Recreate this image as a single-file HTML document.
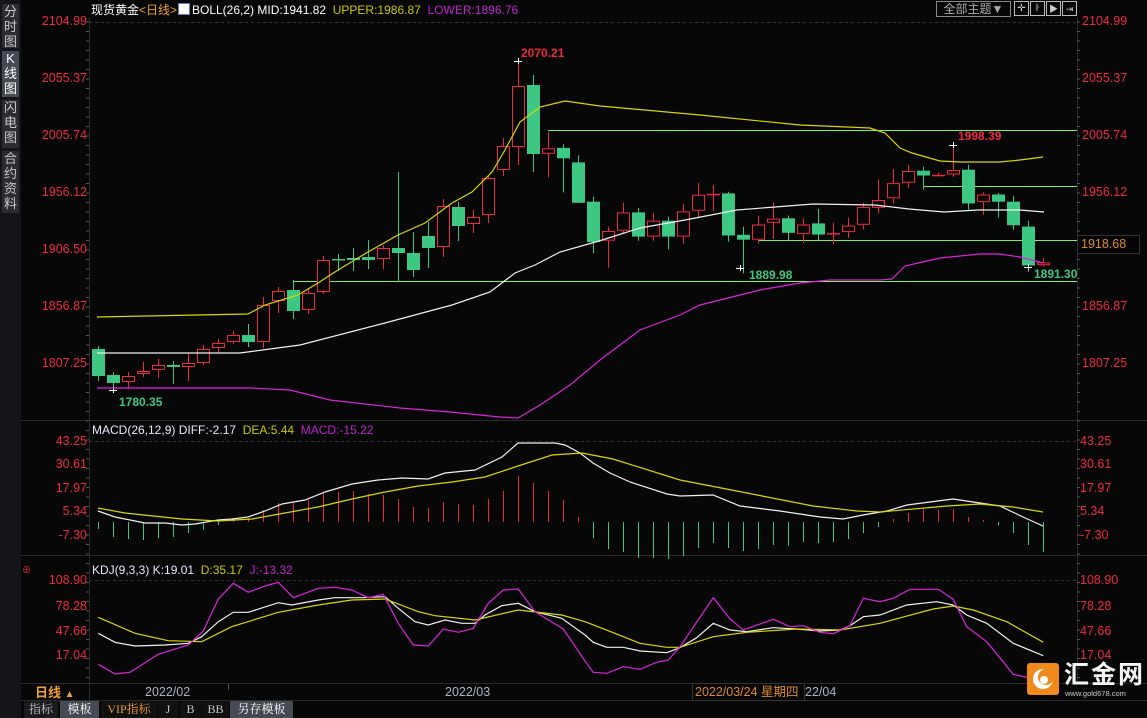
<!DOCTYPE html>
<html><head><meta charset="utf-8">
<style>
html,body{margin:0;padding:0;background:#070707;width:1147px;height:718px;overflow:hidden}
body{position:relative;font-family:"Liberation Sans","Noto Sans CJK SC",sans-serif}
.t{position:absolute;white-space:nowrap;font-size:12px;line-height:14px}
.side{position:absolute;left:2px;width:17px;background:#2b2d33;color:#c8c8c8;font-size:13px;line-height:15px;text-align:center}
.lab{position:absolute;font-size:12.5px;color:#f0283c;text-align:right;width:60px}
.tab{position:absolute;top:701px;height:17px;font-size:12px;line-height:17px;text-align:center;color:#c8c8c8;font-family:"Liberation Serif","Noto Serif CJK SC",serif}
</style></head><body>
<svg id="s" width="1147" height="718" style="position:absolute;left:0;top:0" xmlns="http://www.w3.org/2000/svg"></svg>

<div class="side" style="top:4px;height:44px">分<br>时<br>图</div>
<div class="side" style="top:51px;height:46px;background:#464a52;color:#fff">K<br>线<br>图</div>
<div class="side" style="top:100px;height:48px">闪<br>电<br>图</div>
<div class="side" style="top:151px;height:62px">合<br>约<br>资<br>料</div>

<div class="t" style="left:91px;top:3px;color:#fff">现货黄金<span style="color:#f0a030">&lt;日线&gt;</span></div>
<div class="t" style="left:178px;top:3px;width:12px;height:12px;background:#fff;border:1px solid #6a7ac0;box-sizing:border-box"></div>
<div class="t" style="left:192px;top:3px;color:#fff">BOLL(26,2) MID:1941.82 &nbsp;<span style="color:#c8c800">UPPER:1986.87</span> &nbsp;<span style="color:#c020d0">LOWER:1896.76</span></div>
<div class="t" style="left:936px;top:1px;width:73px;height:14px;border:1px solid #888;color:#aaa;text-align:center;font-size:12px">全部主题▼</div>
<div class="t" style="left:1014px;top:1px;width:13px;height:13px;border:1px solid #bbb;color:#ccc;font-size:10px;text-align:center">✛</div>
<div class="t" style="left:1030px;top:1px;width:13px;height:13px;border:1px solid #bbb;color:#ccc;font-size:10px;text-align:center">ŀ</div>
<div class="t" style="left:1046px;top:1px;width:13px;height:13px;border:1px solid #bbb;color:#ccc;font-size:9px;text-align:center">▶</div>
<div class="t" style="left:1062px;top:1px;width:13px;height:13px;border:1px solid #bbb;color:#ccc;font-size:9px;text-align:center">⇥</div>

<div class="lab" style="left:27px;top:14px">2104.99</div>
<div class="lab" style="left:27px;top:71px">2055.37</div>
<div class="lab" style="left:27px;top:128px">2005.74</div>
<div class="lab" style="left:27px;top:185px">1956.12</div>
<div class="lab" style="left:27px;top:242px">1906.50</div>
<div class="lab" style="left:27px;top:299px">1856.87</div>
<div class="lab" style="left:27px;top:356px">1807.25</div>
<div class="lab" style="left:1082px;top:14px;text-align:left">2104.99</div>
<div class="lab" style="left:1082px;top:71px;text-align:left">2055.37</div>
<div class="lab" style="left:1082px;top:128px;text-align:left">2005.74</div>
<div class="lab" style="left:1082px;top:185px;text-align:left">1956.12</div>
<div class="lab" style="left:1082px;top:299px;text-align:left">1856.87</div>
<div class="lab" style="left:1082px;top:356px;text-align:left">1807.25</div>
<div class="t" style="left:1077px;top:235px;width:58px;height:17px;border:1px solid #333;background:#050505;color:#e08a2a;font-size:12.5px;line-height:17px;padding-left:3px">1918.68</div>

<div class="t" style="left:521px;top:46px;color:#f0283c;font-weight:bold">2070.21</div>
<div class="t" style="left:958px;top:129px;color:#f0283c;font-weight:bold">1998.39</div>
<div class="t" style="left:749px;top:268px;color:#3cc882;font-weight:bold">1889.98</div>
<div class="t" style="left:1034px;top:267px;color:#3cc882;font-weight:bold">1891.30</div>
<div class="t" style="left:119px;top:395px;color:#3cc882;font-weight:bold">1780.35</div>

<div class="t" style="left:92px;top:423px;color:#e8e8ff">MACD(26,12,9) DIFF:-2.17 &nbsp;<span style="color:#c8c800">DEA:5.44</span> &nbsp;<span style="color:#c020d0">MACD:-15.22</span></div>
<div class="lab" style="left:27px;top:434px">43.25</div>
<div class="lab" style="left:27px;top:457px">30.61</div>
<div class="lab" style="left:27px;top:481px">17.97</div>
<div class="lab" style="left:27px;top:504px">5.34</div>
<div class="lab" style="left:27px;top:528px">-7.30</div>
<div class="lab" style="left:1080px;top:434px;text-align:left">43.25</div>
<div class="lab" style="left:1080px;top:457px;text-align:left">30.61</div>
<div class="lab" style="left:1080px;top:481px;text-align:left">17.97</div>
<div class="lab" style="left:1080px;top:504px;text-align:left">5.34</div>
<div class="lab" style="left:1080px;top:528px;text-align:left">-7.30</div>

<div class="t" style="left:92px;top:563px;color:#e8e8ff">KDJ(9,3,3) K:19.01 &nbsp;<span style="color:#c8c800">D:35.17</span> &nbsp;<span style="color:#c020d0">J:-13.32</span></div>
<div class="t" style="left:22px;top:563px;color:#f0283c;font-size:9px">⊕</div>
<div class="lab" style="left:27px;top:573px">108.90</div>
<div class="lab" style="left:27px;top:599px">78.28</div>
<div class="lab" style="left:27px;top:624px">47.66</div>
<div class="lab" style="left:27px;top:648px">17.04</div>
<div class="lab" style="left:1080px;top:573px;text-align:left">108.90</div>
<div class="lab" style="left:1080px;top:599px;text-align:left">78.28</div>
<div class="lab" style="left:1080px;top:624px;text-align:left">47.66</div>
<div class="lab" style="left:1080px;top:648px;text-align:left">17.04</div>

<div class="t" style="left:35px;top:686px;color:#f0a030;font-size:13px;font-weight:bold">日线 <span style="font-size:10px">▲</span></div>
<div class="t" style="left:145px;top:685px;color:#a8b4c8;font-size:12.5px">2022/02</div>
<div class="t" style="left:445px;top:685px;color:#a8b4c8;font-size:12.5px">2022/03</div>
<div class="t" style="left:692px;top:683px;width:109px;height:16px;border:1px solid #333;color:#e08a2a;font-size:12.5px;line-height:16px;padding-left:2px">2022/03/24 星期四</div>
<div class="t" style="left:805px;top:685px;color:#a8b4c8;font-size:12.5px">22/04</div>

<div style="position:absolute;left:1027px;top:663px;width:32px;height:32px;background:#f08a1a;border-radius:3px"></div>
<svg style="position:absolute;left:1027px;top:663px" width="32" height="32"><circle cx="16" cy="16" r="10" fill="#fff"/><circle cx="19" cy="14" r="8" fill="#f08a1a"/><circle cx="17" cy="17" r="4" fill="#fff"/></svg>
<div class="t" style="left:1064px;top:661px;color:#f4f4f4;font-size:25px;line-height:28px;font-weight:bold;letter-spacing:2px">汇金网</div>
<div class="t" style="left:1065px;top:689px;color:#ccc;font-size:7.5px;line-height:9px">www.gold678.com</div>

<div class="tab" style="left:24px;width:34px;background:#1a1b1e">指标</div>
<div class="tab" style="left:60px;width:39px;background:#464a52;color:#fff">模板</div>
<div class="tab" style="left:101px;width:56px;color:#f0a030;background:#111">VIP指标</div>
<div class="tab" style="left:158px;width:20px;background:#111">J</div>
<div class="tab" style="left:180px;width:21px;background:#111">B</div>
<div class="tab" style="left:202px;width:27px;background:#111">BB</div>
<div class="tab" style="left:230px;width:63px;background:#464a52;color:#fff">另存模板</div>

<script>
var s=document.getElementById('s'),h='';
function L(x1,y1,x2,y2,c,w,d){h+='<line x1="'+x1+'" y1="'+y1+'" x2="'+x2+'" y2="'+y2+'" stroke="'+c+'" stroke-width="'+(w||1)+'"'+(d?' stroke-dasharray="'+d+'"':'')+'/>';}
function P(pts,c){h+='<polyline fill="none" stroke="'+c+'" stroke-width="1.2" points="'+pts.map(function(p){return p[0]+','+p[1]}).join(' ')+'"/>';}
// frame
h+='<rect x="0" y="0" width="1147" height="718" fill="#070707"/>';
h+='<rect x="0" y="0" width="21" height="718" fill="#141518"/>';
L(89.5,18,89.5,700,'#2a2a2a');L(1077.5,18,1077.5,683,'#2a2a2a');
L(21,420.5,1147,420.5,'#2a2a2a');L(21,555.5,1147,555.5,'#2a2a2a');L(21,683.5,1147,683.5,'#2a2a2a');L(21,700.5,1147,700.5,'#2a2a2a');
L(89,22.5,1077,22.5,'#333','1','3,3');L(89,441.5,1077,441.5,'#333','1','3,3');L(89,580.5,1077,580.5,'#333','1','3,3');
for(var y=22;y<683;y+=9.5){L(86,y,89,y,'#555');L(1077,y,1080,y,'#555');}
// green lines
L(548,130.5,1077,130.5,'#80f060');L(923,186.5,1077,186.5,'#80f060');L(923.5,170,923.5,186,'#80f060');
L(759,240.5,1077,240.5,'#80f060');L(293,281.5,1077,281.5,'#80f060');L(293.5,281,293.5,290,'#80f060');
// candles [o,c,h,l] orig coords, G=green(down)
var A=[['g',349,376,346,381],['g',375,383,372,390],['r',382,376,372,388],['r',374,371,362,377],['r',370,365,359,378],['g',365,367,361,384],['r',367,363,353,381],['r',363,349,345,365],['r',348,343,339,353],['r',342,335,331,344],['g',335,342,324,347],['r',342,305,297,348],['r',301,291,287,313],['g',290,311,280,319],['r',310,293,288,314],['r',292,260,256,294],['g',259,260,254,271],['g',258,260,248,271],['g',257,260,240,269],['r',259,248,245,269],['g',248,253,172,282],['g',253,270,232,277],['g',236,248,222,268],['r',247,206,199,257],['g',207,226,202,241],['r',224,217,210,233],['r',215,178,175,223],['r',170,146,138,176],['r',147,86,61,165],['g',85,154,75,172]];
var B=[['r',98,82,35,167],['g',81,111,70,210],['g',123,240,102,240],['g',237,354,222,387],['r',350,322,309,428],['r',321,268,240,327],['g',268,338,255,350],['r',338,292,270,350],['g',292,338,280,375],['r',338,265,243,359],['r',263,217,183,285],['r',216,214,189,263],['g',213,335,208,353],['g',333,347,310,445],['r',347,303,278,357],['r',298,286,240,345],['g',285,327,277,350],['r',331,303,285,357],['g',300,332,258,350],['r',331,328,298,360],['r',325,306,283,342],['r',304,252,240,317],['r',255,232,172,271],['r',227,183,142,243],['r',182,148,130,197],['g',147,161,135,202],['r',160,159,153,163],['r',158,145,72,165],['g',144,242,130,260],['r',238,216,210,275],['g',216,237,212,283],['g',237,305,220,318],['g',309,422,292,440],['r',421,413,400,425]];
B.forEach(function(b){A.push([b[0]].concat(b.slice(1).map(function(v){return +(120+v/2.9).toFixed(1)})));});
A.forEach(function(c,i){var x=98+i*15,t=Math.min(c[1],c[2]),bt=Math.max(c[1],c[2]);
 if(c[0]=='g'){L(x+.5,c[3],x+.5,c[4],'#3cc882');h+='<rect x="'+(x-6)+'" y="'+t+'" width="13" height="'+Math.max(1.5,bt-t)+'" fill="#3cc882"/>';}
 else{L(x+.5,c[3],x+.5,t,'#f0283c');L(x+.5,bt,x+.5,c[4],'#f0283c');h+='<rect x="'+(x-5.5)+'" y="'+(t+.5)+'" width="12" height="'+Math.max(.5,bt-t-1)+'" fill="#070707" stroke="#f0283c"/>';}});
// crosses
[[113,390],[518,61],[740,268],[953,145],[1028,267]].forEach(function(p){L(p[0]-4,p[1]+.5,p[0]+4,p[1]+.5,'#fff');L(p[0]+.5,p[1]-3,p[0]+.5,p[1]+3,'#fff');});
// boll
P([[97,317],[248,314],[265,305],[298,295],[318,283],[338,270],[368,252],[398,235],[425,223],[452,203],[472,192],[492,172],[505,150],[520,122],[540,107],[565,101],[600,106],[700,115],[800,125],[870,128],[885,133],[900,148],[912,153],[940,161],[960,162],[1000,162],[1020,160],[1043,157]],'#d8d800');
P([[97,353],[240,353],[300,345],[385,323],[452,305],[490,292],[515,273],[535,265],[560,252],[599,241],[640,228],[685,220],[737,210],[813,204],[875,205],[909,209],[944,212],[978,210],[1020,210],[1044,212]],'#f0f0f0');
P([[97,388],[250,388],[290,390],[330,400],[400,408],[450,412],[500,417],[518,418],[540,405],[570,385],[600,360],[640,330],[680,315],[700,305],[760,290],[800,283],[830,280],[880,280],[892,279],[905,266],[940,258],[980,254],[1000,254],[1020,257],[1043,263]],'#e020e0');
// MACD bars
var M=[529,537,539,540,538,537,533,530,525,518,518,510,503,503,500,493,492,491,494,495,499,507,508,502,504,505,499,491,476,483,491,500,517,538,549,552,558,558,559,556,548,543,548,551,549,545,546,542,543,542,539,533,527,519,513,509,510,509,517,520,525,533,545,552];
M.forEach(function(v,i){var x=98+i*15+.5;L(x,522,x,v,v<522?'#f0283c':'#3cc882');});
P([[98,511],[115,517],[145,523],[165,523],[182,525],[195,524],[218,520],[232,519],[248,517],[265,511],[282,504],[305,500],[325,492],[352,484],[378,480],[402,478],[428,479],[445,473],[475,470],[502,457],[518,443],[555,443],[565,445],[580,453],[593,463],[610,473],[630,482],[667,494],[680,496],[713,495],[740,506],[780,511],[820,517],[843,519],[863,515],[887,511],[907,505],[930,502],[953,499],[980,503],[1000,506],[1023,517],[1043,526]],'#f0f0f0');
P([[98,508],[125,513],[182,519],[218,521],[252,519],[285,513],[318,507],[352,499],[385,492],[418,486],[452,482],[485,477],[518,466],[552,455],[582,453],[613,459],[680,480],[747,493],[813,506],[857,511],[880,512],[947,506],[980,504],[1013,507],[1043,512]],'#d8d800');
// KDJ
function K(a,off){return a.map(function(p){return [+(off+p[0]/3).toFixed(1),+(555+p[1]/3).toFixed(1)]});}
P(K([[40,235],[90,262],[150,273],[240,270],[310,265],[350,245],[400,200],[445,172],[490,172],[580,143],[620,150],[700,135],[750,128],[830,128],[900,125],[940,160],[990,200],[1030,210],[1080,195],[1130,205],[1170,205],[1200,180],[1250,152],[1300,145],[1350,170],[1430,190],[1500,240]],85).concat(K([[40,262],[80,277],[130,277],[180,288],[260,293],[300,278],[350,248],[400,205],[450,225],[500,230],[580,218],[650,222],[720,228],[780,225],[810,212],[850,185],[900,180],[980,150],[1070,140],[1120,150],[1160,180],[1220,205],[1300,265],[1390,302]],580)),'#f0f0f0');
P(K([[40,187],[150,235],[250,257],[350,260],[440,215],[580,172],[700,150],[800,135],[900,132],[1000,170],[1050,182],[1170,195],[1300,165],[1430,180],[1500,200]],85).concat(K([[100,233],[180,265],[260,277],[300,277],[400,245],[500,232],[650,222],[780,225],[900,205],[1000,178],[1060,162],[1120,153],[1180,165],[1280,200],[1390,262]],580)),'#d8d800');
P(K([[40,328],[90,357],[135,352],[220,298],[310,270],[355,228],[400,132],[445,85],[490,112],[540,93],[580,82],[625,128],[700,100],[750,97],[800,105],[850,128],[895,118],[940,205],[985,270],[1030,273],[1075,222],[1120,232],[1165,220],[1210,145],[1255,105],[1300,102],[1350,170],[1435,222],[1500,318]],85).concat(K([[40,352],[80,355],[130,335],[180,343],[230,322],[265,315],[300,275],[400,128],[450,192],[490,225],[580,193],[630,215],[670,212],[720,232],[760,236],[810,212],[850,130],[900,140],[940,130],[990,103],[1075,103],[1120,133],[1160,215],[1220,260],[1300,358],[1390,378]],580)),'#e020e0');
// date bar separators
L(89.5,683,89.5,700,'#2a2a2a');L(228.5,684,228.5,690,'#555');
s.innerHTML=h;
</script>
</body></html>
